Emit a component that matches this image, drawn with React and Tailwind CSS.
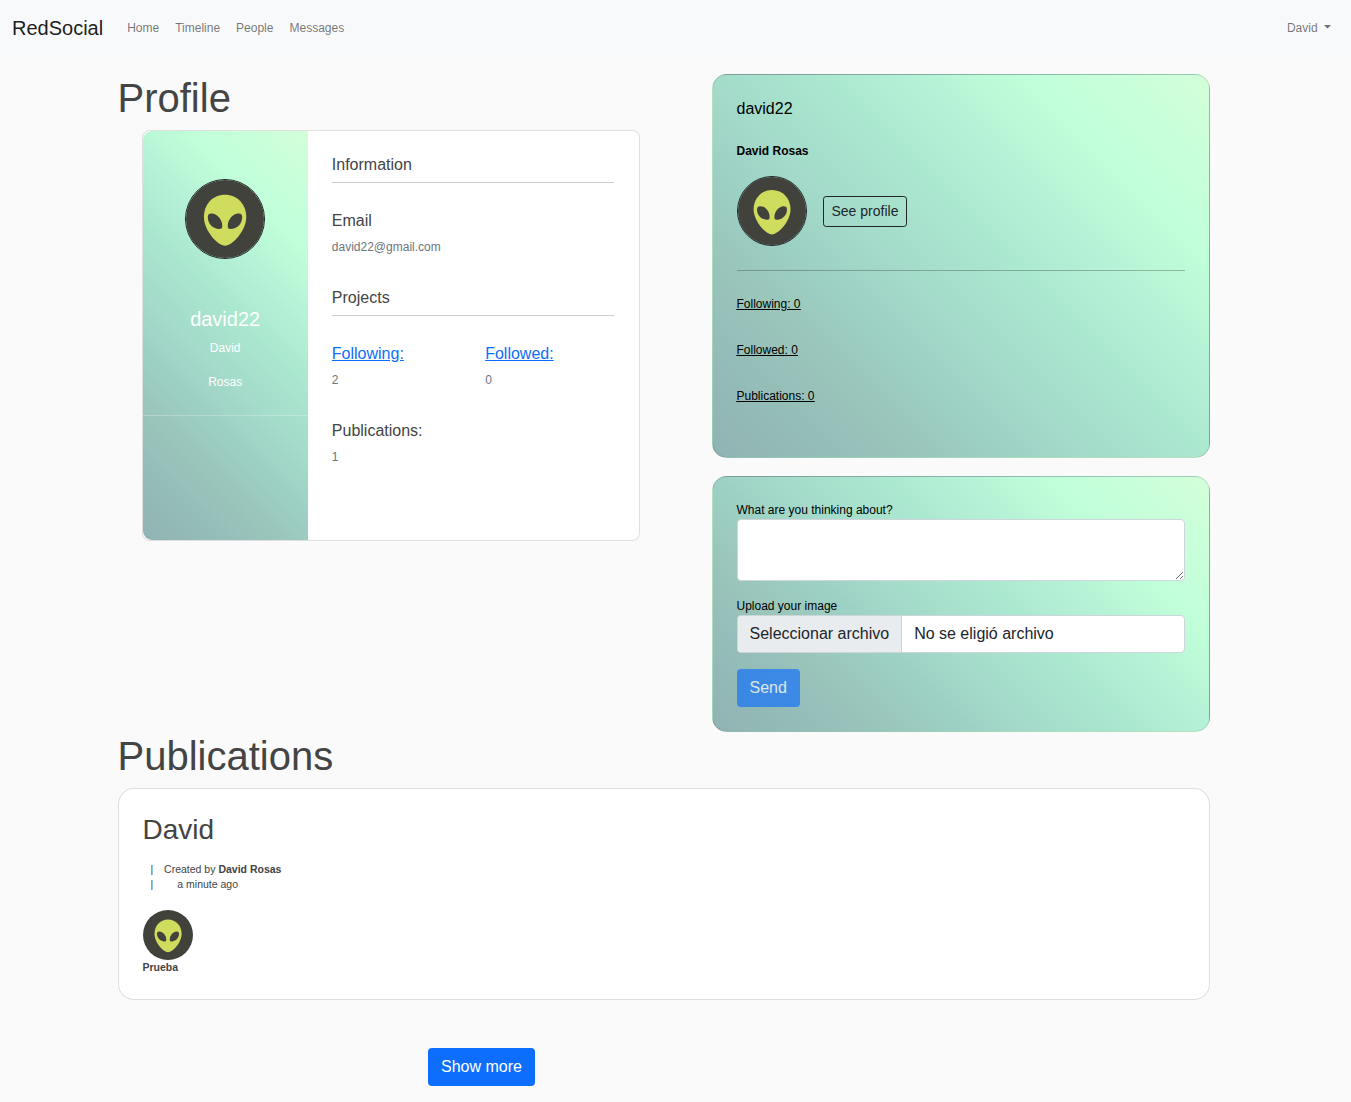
const GRADIENT =
  "bg-[linear-gradient(45deg,#90b3b2_0%,#95beb9_15%,#9ac6bb_24%,#9dd0c4_33%,#a4dbca_43%,#abe8d0_56%,#b4f1d6_66%,#bdfbd8_75%,#c0ffda_79%,#c7ffda_88%,#d3ffd9_100%)]";

function Alien({ className }) {
  return (
    <svg viewBox="0 0 80 80" className={"block rounded-full " + className}>
      <rect width="80" height="80" fill="#42423d" />
      <path
        d="M40 15.200C27 15.200 18.400 25.500 18.400 38C18.400 52 32.500 67.500 40 67.500C47.500 67.500 61.800 52 61.800 38C61.800 25.500 53 15.200 40 15.200Z"
        fill="#cfdc5e"
      />
      <path
        d="M26.500 34.300C31.500 34.300 37.300 40.500 37.200 47C37.100 49.800 36.300 50.300 34 50.300C28 50.300 22.400 45 22.400 38.500C22.400 35.500 23.200 34.300 26.500 34.300Z"
        fill="#42423d"
      />
      <path
        d="M53.500 34.300C48.500 34.300 42.700 40.500 42.800 47C42.900 49.800 43.700 50.300 46 50.300C52 50.300 57.600 45 57.600 38.500C57.600 35.500 56.800 34.300 53.500 34.300Z"
        fill="#42423d"
      />
    </svg>
  );
}

function Navbar() {
  return (
    <nav className="flex h-14 items-center bg-[#f8f9fb] px-3 text-xs text-black/55">
      <a className="mr-4 text-xl leading-[30px] text-black/90">RedSocial</a>
      <a className="px-2">Home</a>
      <a className="px-2">Timeline</a>
      <a className="px-2">People</a>
      <a className="px-2">Messages</a>
      <a className="ml-auto flex items-center px-2">
        David
        <svg viewBox="0 0 7 4" className="-mt-[2px] ml-[6.4px] h-1 w-[7px]" fill="currentColor">
          <path d="M0 0H7L3.500 3.600Z" />
        </svg>
      </a>
    </nav>
  );
}

function Field({ label, value, link }) {
  return (
    <div className="flex-1">
      <h6 className={"mb-2 text-base leading-[19.2px] " + (link ? "text-[#0d6efd] underline" : "")}>
        {label}
      </h6>
      <p className="text-xs leading-[18px] text-[#6c757d]">{value}</p>
    </div>
  );
}

function SectionTitle({ children }) {
  return (
    <h6 className="mb-[27.5px] border-b border-[#cdcdcd] pb-2 text-base leading-[19.2px]">
      {children}
    </h6>
  );
}

function ProfileCard() {
  return (
    <div className="ml-6 flex h-[411px] w-[498px] rounded-lg border border-black/[.125] bg-white">
      <div className={"w-[165.33px] shrink-0 rounded-l-[9px] text-center text-white " + GRADIENT}>
        <Alien className="mx-auto mt-12 size-20 border border-[#212529]" />
        <h5 className="mt-12 mb-2 text-xl leading-6">david22</h5>
        <p className="text-xs leading-[18px]">David</p>
        <p className="mt-4 mb-6 text-xs leading-[18px]">Rosas</p>
        <hr className="border-white/25" />
      </div>
      <div className="flex-1 py-6 pr-[25px] pl-6">
        <SectionTitle>Information</SectionTitle>
        <div className="mb-8 flex">
          <Field label="Email" value="david22@gmail.com" />
        </div>
        <SectionTitle>Projects</SectionTitle>
        <div className="-mr-[25px] mb-8 flex">
          <Field label="Following:" value="2" link />
          <Field label="Followed:" value="0" link />
        </div>
        <Field label="Publications:" value="1" />
      </div>
    </div>
  );
}

function UserCard() {
  return (
    <div
      className={
        "h-[384px] rounded-[15px] border border-black/[.125] p-6 text-xs leading-[18px] text-black " +
        GRADIENT
      }
    >
      <h6 className="mb-6 text-base leading-[19.2px]">david22</h6>
      <p className="mb-4 font-bold">David Rosas</p>
      <div className="flex items-center gap-4">
        <Alien className="size-[70px] border border-[#212529]" />
        <button className="h-[31px] rounded-[3.2px] border border-[#212529] px-2 text-sm leading-[21px] text-[#212529]">
          See profile
        </button>
      </div>
      <hr className="my-6 border-black/25" />
      <div className="flex flex-col items-start gap-7 underline">
        <a>Following: 0</a>
        <a>Followed: 0</a>
        <a>Publications: 0</a>
      </div>
    </div>
  );
}

function PostForm() {
  return (
    <form
      className={
        "mt-[18px] h-[256px] rounded-[15px] border border-black/[.125] p-6 text-xs leading-[18px] text-black " +
        GRADIENT
      }
    >
      <label className="block">What are you thinking about?</label>
      <textarea className="block h-[62px] w-full resize rounded border border-[#ced4da] bg-white" />
      <label className="mt-4 block">Upload your image</label>
      <div className="flex h-[38px] overflow-hidden rounded border border-[#ced4da] bg-white text-base leading-9 text-[#212529]">
        <span className="border-r border-[#ced4da] bg-[#e9ecef] px-3">Seleccionar archivo</span>
        <span className="px-3">No se eligió archivo</span>
      </div>
      <button
        type="button"
        className="mt-4 h-[38px] rounded bg-[#0d6efd] px-[13px] text-base text-white opacity-65"
      >
        Send
      </button>
    </form>
  );
}

function Publication() {
  return (
    <article className="h-[212px] rounded-[16px] border border-black/[.125] bg-white p-6 text-[10.5px] leading-[15px]">
      <h3 className="mb-[15px] text-[28px] leading-[33.6px]">David</h3>
      <div className="flex pl-2">
        <span className="w-[13.6px]">|</span>
        <span>
          Created by <b>David Rosas</b>
        </span>
      </div>
      <div className="flex pl-2">
        <span className="w-[26.8px]">|</span>
        <span>a minute ago</span>
      </div>
      <Alien className="mt-[18px] size-[50px]" />
      <b className="block">Prueba</b>
    </article>
  );
}

export default function App() {
  return (
    <div className="min-h-[1102px] bg-[#fafafa] font-['Liberation_Sans',Arial,sans-serif] text-[#444]">
      <Navbar />
      <main className="ml-[117.5px] w-[1092px] pt-[18px]">
        <div className="flex justify-between">
          <section>
            <h1 className="mb-2 text-[40px] leading-[48px]">Profile</h1>
            <ProfileCard />
          </section>
          <aside className="w-[498px]">
            <UserCard />
            <PostForm />
          </aside>
        </div>
        <h1 className="mb-2 text-[40px] leading-[48px]">Publications</h1>
        <Publication />
        <button className="mt-12 ml-[310.5px] h-[38px] rounded bg-[#0d6efd] px-[13px] text-base text-white">
          Show more
        </button>
      </main>
    </div>
  );
}
